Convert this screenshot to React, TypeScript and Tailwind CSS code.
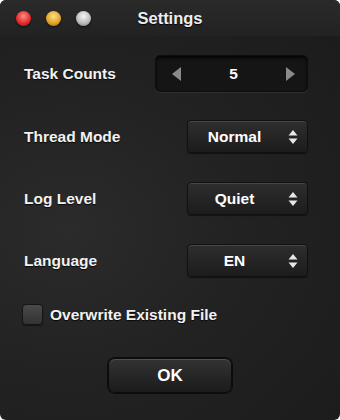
import { ReactNode } from "react";

const FONT = { fontFamily: '"Liberation Sans", Arial, sans-serif' };

function Light({ color }: { color: string }) {
  return (
    <span
      className="h-[15px] w-[15px] rounded-full shadow-[0_1px_2px_rgba(0,0,0,0.6)]"
      style={{ background: color }}
    />
  );
}

function Row({ label, children, className }: { label: string; children: ReactNode; className: string }) {
  return (
    <div className={`flex items-center justify-between ${className}`}>
      <span className="text-[15.5px] font-bold text-[#f2f2f2] [text-shadow:0_1px_1px_rgba(0,0,0,0.8)]">{label}</span>
      {children}
    </div>
  );
}

function Popup({ value }: { value: string }) {
  return (
    <div className="relative flex h-[33px] w-[121px] items-center justify-center rounded-[4px] border border-[#111] bg-gradient-to-b from-[#2e2e2e] to-[#1c1c1c] pr-[26px] shadow-[inset_0_1px_0_rgba(255,255,255,0.12),0_1px_1px_rgba(0,0,0,0.5)]">
      <span className="text-[15.5px] font-bold text-white">{value}</span>
      <svg className="absolute right-[9px] top-1/2 -translate-y-1/2" width="10" height="16" viewBox="0 0 10 16">
        <path d="M5 1 L9.5 6.5 H0.5 Z" fill="#e8e8e8" />
        <path d="M5 15 L9.5 9.5 H0.5 Z" fill="#e8e8e8" />
      </svg>
    </div>
  );
}

export default function App() {
  return (
    <div
      className="h-[420px] w-[340px] overflow-hidden rounded-[6px] bg-[radial-gradient(ellipse_at_20%_55%,#2b2b2b_0%,#222_45%,#1b1b1b_100%)] text-white"
      style={FONT}
    >
      {/* title bar */}
      <div className="relative flex h-[36px] items-center bg-gradient-to-b from-[#2a2a2a] to-[#222] px-[16px]">
        <div className="flex items-center gap-[15px]">
          <Light color="radial-gradient(circle at 50% 35%, #ff8a8a, #e02828 60%, #8a1010)" />
          <Light color="radial-gradient(circle at 50% 35%, #ffe08a, #e0a020 60%, #8a5a10)" />
          <Light color="radial-gradient(circle at 50% 35%, #f4f4f4, #b8b8b8 60%, #6a6a6a)" />
        </div>
        <span className="absolute left-1/2 -translate-x-1/2 text-[16.5px] font-bold text-[#eeeeee] [text-shadow:0_1px_1px_rgba(0,0,0,0.9)]">
          Settings
        </span>
      </div>

      <div className="px-[24px] pr-[32px]">
        <Row label="Task Counts" className="mt-[19px]">
          <div className="flex h-[37px] w-[153px] items-center justify-between rounded-[5px] border border-[#0c0c0c] bg-[#151515] pl-[16px] pr-[12px] shadow-[inset_0_2px_3px_rgba(0,0,0,0.8),0_1px_0_rgba(255,255,255,0.08)]">
            <svg width="9" height="14" viewBox="0 0 9 14">
              <path d="M9 0 V14 L0 7 Z" fill="#8a8a8a" />
            </svg>
            <span className="text-[15.5px] font-bold text-white">5</span>
            <svg width="9" height="14" viewBox="0 0 9 14">
              <path d="M0 0 V14 L9 7 Z" fill="#8a8a8a" />
            </svg>
          </div>
        </Row>

        <Row label="Thread Mode" className="mt-[28px]">
          <Popup value="Normal" />
        </Row>
        <Row label="Log Level" className="mt-[29px]">
          <Popup value="Quiet" />
        </Row>
        <Row label="Language" className="mt-[29px]">
          <Popup value="EN" />
        </Row>

        <label className="mt-[26px] flex items-center gap-[7px] -ml-[2px]">
          <span className="h-[21px] w-[21px] rounded-[4px] border border-[#151515] bg-gradient-to-b from-[#4a4a4a] to-[#333] shadow-[0_1px_1px_rgba(0,0,0,0.5)]" />
          <span className="text-[15.5px] font-bold text-[#f2f2f2] [text-shadow:0_1px_1px_rgba(0,0,0,0.8)]">
            Overwrite Existing File
          </span>
        </label>

        <div className="mt-[32px] flex justify-center pl-[8px]">
          <button className="h-[35px] w-[124px] rounded-[7px] border border-[#0c0c0c] bg-gradient-to-b from-[#333] to-[#1b1b1b] text-[17px] font-bold text-white shadow-[inset_0_1px_0_rgba(255,255,255,0.15),0_0_0_1px_rgba(0,0,0,0.6)]">
            OK
          </button>
        </div>
      </div>
    </div>
  );
}
